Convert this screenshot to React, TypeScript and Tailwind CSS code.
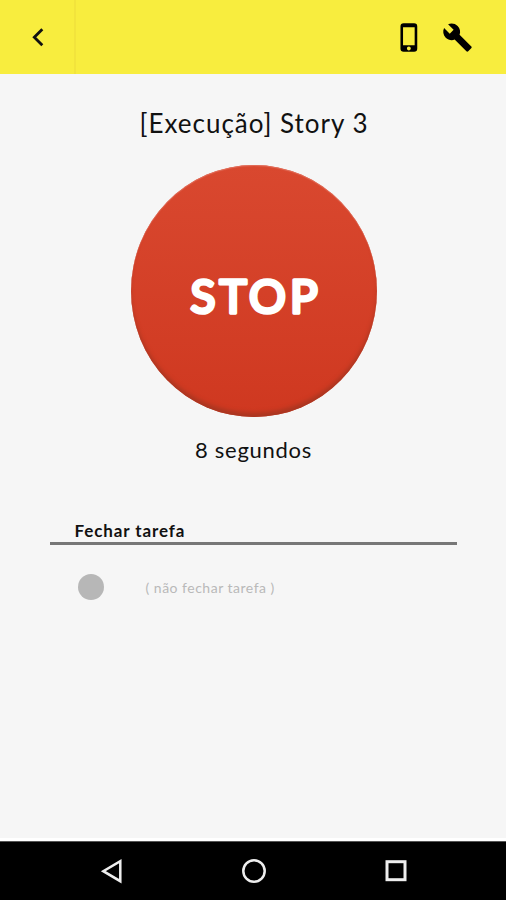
import { MdBuild, MdPhoneIphone } from "react-icons/md";

function Header() {
  return (
    <header className="flex h-[74px] shrink-0 bg-[#f8ed3e]">
      <button className="flex w-[76px] items-center justify-center border-r-2 border-[#f2e43c]">
        <svg width="14" height="20" viewBox="0 0 14 20" fill="none" stroke="#111" strokeWidth="2.8">
          <path d="M12.3 2.2 4.3 10.2l8 8" />
        </svg>
      </button>
      <div className="flex flex-1 items-center justify-end gap-[17px] pr-[33px] text-black">
        <MdPhoneIphone size={31} />
        <MdBuild size={31} />
      </div>
    </header>
  );
}

function NavigationBar() {
  return (
    <nav className="flex h-[59px] shrink-0 items-center justify-between border-t border-[#555] bg-black pr-[97px] pl-[99px]">
      <svg width="25" height="26" viewBox="0 0 25 26" fill="none" stroke="#eee" strokeWidth="2.5">
        <path d="M21.3 3.2v20L4.3 13.2Z" />
      </svg>
      <svg width="26" height="26" viewBox="0 0 26 26" fill="none" stroke="#eee" strokeWidth="2.5">
        <circle cx="13" cy="13" r="10.7" />
      </svg>
      <svg width="26" height="26" viewBox="0 0 26 26" fill="none" stroke="#eee" strokeWidth="3">
        <rect x="4" y="3.7" width="18" height="18" />
      </svg>
    </nav>
  );
}

export default function App() {
  return (
    <div className="flex h-[900px] w-[506px] flex-col overflow-hidden bg-[#f6f6f6] font-['Lato',sans-serif] text-[#111]">
      <Header />

      <main className="flex flex-1 flex-col items-center">
        <h1 className="mt-[32px] ml-[2px] h-[34px] text-[26px] leading-[34px] tracking-[0.98px] whitespace-nowrap">
          [Execução] Story 3
        </h1>

        <button className="mt-[25px] ml-[2px] flex h-[252px] w-[246px] items-center justify-center rounded-[50%] bg-linear-to-b from-[#d9482f] to-[#cf3820] pt-[12px] shadow-[inset_0_-5px_4px_-1px_#a93621,inset_0_1px_1px_#e2705d]">
          {/* round joins soften the corners of the label */}
          <svg className="overflow-visible" width="150" height="80" viewBox="0 0 150 80">
            <text
              x="11.5"
              y="56"
              fontSize="46"
              fontWeight="400"
              textLength="127"
              fill="#fff"
              stroke="#fff"
              strokeWidth="3.6"
              strokeLinejoin="round"
            >
              STOP
            </text>
          </svg>
        </button>

        <p className="mt-[19px] ml-[1px] h-[28px] text-[22px] leading-[28px] tracking-[0.72px]">8 segundos</p>

        <section className="mt-[55px] w-[407px]">
          <h2 className="h-[22px] pt-px pl-[25px] text-[17px] leading-[22px] font-bold tracking-[0.9px]">
            Fechar tarefa
          </h2>
          <div className="mt-[1px] h-[3px] bg-[#777]" />
          <div className="mt-[29px] flex items-center pl-[28px]">
            <span className="size-[26px] rounded-full bg-[#b7b7b7]" />
            <span className="mt-[2px] ml-[42px] text-[14px] leading-[20px] tracking-[0.5px] text-[#b9b9b9]">
              ( não fechar tarefa )
            </span>
          </div>
        </section>
      </main>

      <div className="h-[3px] shrink-0 bg-white" />
      <NavigationBar />
    </div>
  );
}
